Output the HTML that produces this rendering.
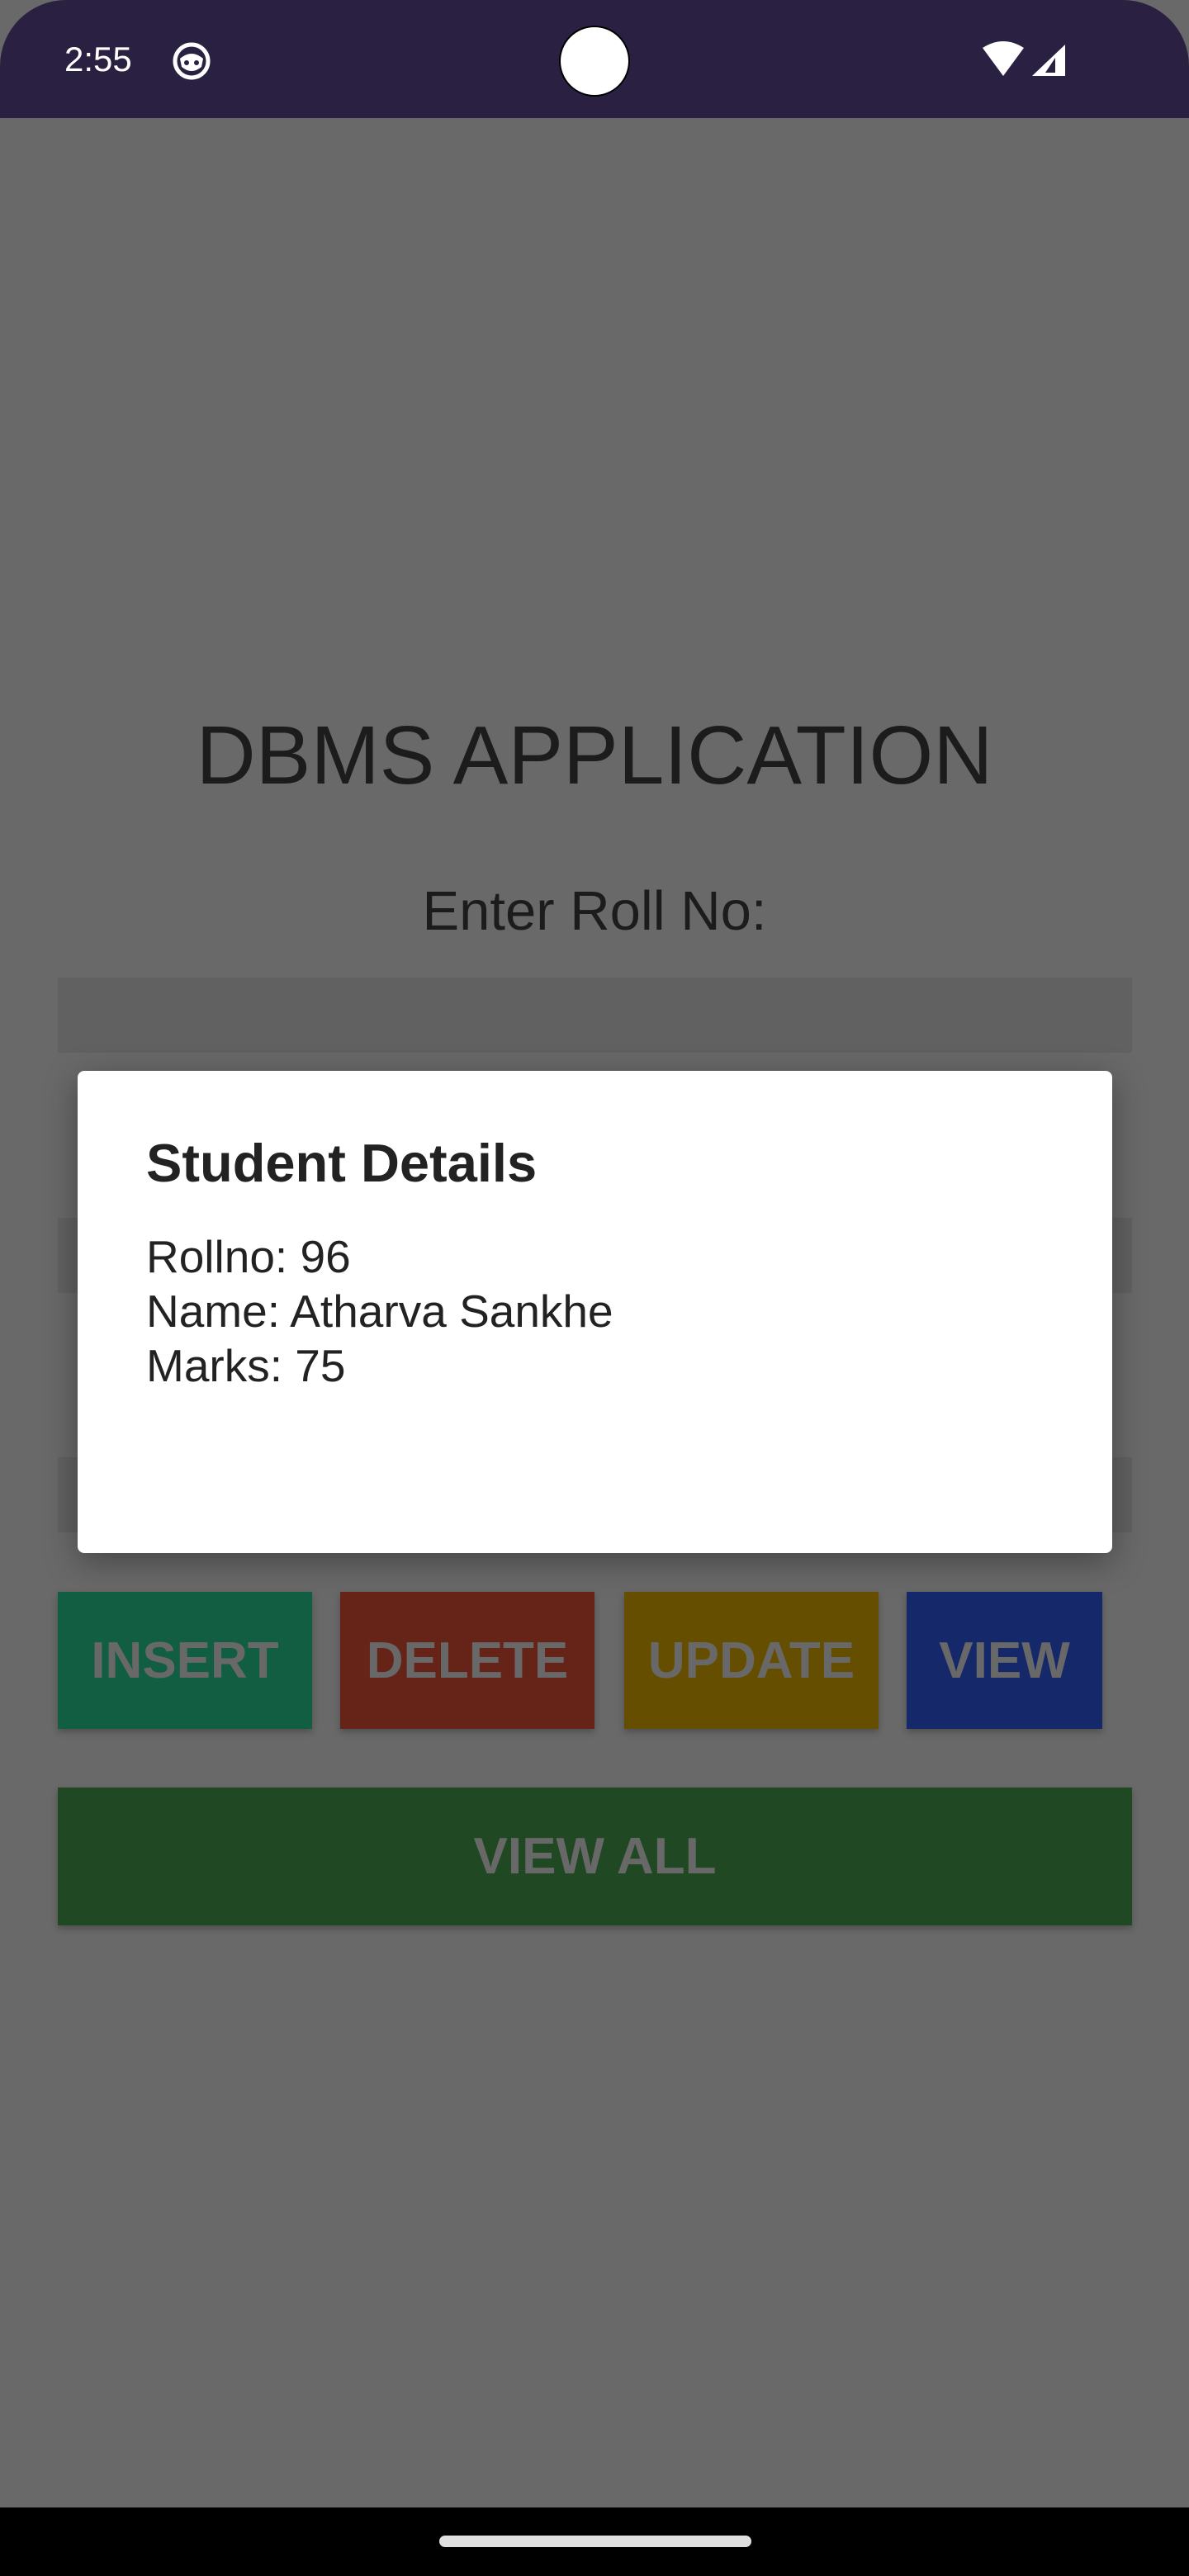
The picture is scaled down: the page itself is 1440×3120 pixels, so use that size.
<!DOCTYPE html>
<html><head><meta charset="utf-8"><style>
*{margin:0;padding:0;box-sizing:border-box}
body{width:1440px;height:3120px;background:#696969;position:relative;overflow:hidden;font-family:"Liberation Sans",sans-serif}
.abs{position:absolute}
.sb{left:0;top:0;width:1440px;height:143px;background:#2a2142;border-radius:80px 80px 0 0}
.inp{left:70px;width:1301px;height:91px;background:#616161}
.btn{top:1928px;height:166px;color:#686868;font-size:62px;font-weight:bold;display:flex;align-items:center;justify-content:center;box-shadow:0 4px 8px rgba(0,0,0,.25)}
</style></head><body>
<div class="abs sb"></div>
<div class="abs" style="left:78px;top:48px;color:#fff;font-size:42px">2:55</div>
<svg class="abs" style="left:209px;top:51px" width="46" height="46" viewBox="0 0 46 46"><circle cx="23" cy="23" r="20" fill="none" stroke="#fff" stroke-width="5"/><path d="M9 20 Q23 8 37 20 L35 30 Q23 40 11 30Z" fill="#fff"/><circle cx="17" cy="25" r="3" fill="#2a2142"/><circle cx="29" cy="25" r="3" fill="#2a2142"/></svg>
<div class="abs" style="left:677px;top:31px;width:86px;height:86px;border-radius:50%;background:#fff;border:2px solid #000"></div>
<svg class="abs" style="left:1188px;top:50px" width="104" height="46" viewBox="0 0 104 46"><path d="M2 8 Q27 -8 52 8 L27 42Z" fill="#fff"/><path d="M102 4 L102 42 L62 42Z" fill="#fff"/><path d="M90 20 L90 38 L78 38Z" fill="#2a2142"/></svg>
<div class="abs" style="left:0;top:858px;width:1440px;text-align:center;font-size:100px;color:#1c1c1c">DBMS APPLICATION</div>
<div class="abs" style="left:0;top:1065px;width:1440px;text-align:center;font-size:67px;color:#1c1c1c">Enter Roll No:</div>
<div class="abs inp" style="top:1184px"></div>
<div class="abs inp" style="top:1475px"></div>
<div class="abs inp" style="top:1765px"></div>
<div class="abs" style="left:94px;top:1297px;width:1253px;height:584px;background:#fff;border-radius:8px;box-shadow:0 10px 40px rgba(0,0,0,.35)">
<div class="abs" style="left:83px;top:74px;font-size:65px;font-weight:bold;color:#222">Student Details</div>
<div class="abs" style="left:83px;top:192px;font-size:55px;line-height:66px;color:#222">Rollno: 96<br>Name: Atharva Sankhe<br>Marks: 75</div>
</div>
<div class="abs btn" style="left:70px;width:308px;background:#115e42">INSERT</div>
<div class="abs btn" style="left:412px;width:308px;background:#662418">DELETE</div>
<div class="abs btn" style="left:756px;width:308px;background:#664e00">UPDATE</div>
<div class="abs btn" style="left:1098px;width:237px;background:#15286a">VIEW</div>
<div class="abs btn" style="left:70px;top:2165px;width:1301px;height:167px;background:#204822">VIEW ALL</div>
<div class="abs" style="left:0;top:3037px;width:1440px;height:83px;background:#000"></div>
<div class="abs" style="left:532px;top:3071px;width:378px;height:14px;border-radius:7px;background:#e0e0e0"></div>
</body></html>
